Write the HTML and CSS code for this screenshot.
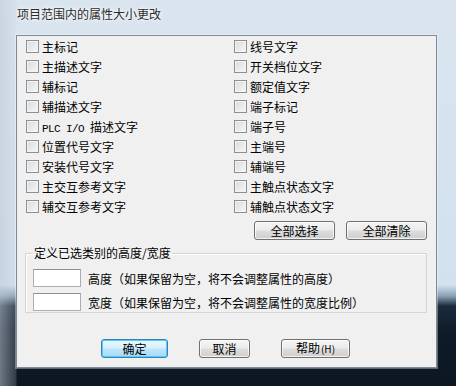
FILE: index.html
```html
<!DOCTYPE html>
<html lang="zh-CN">
<head>
    <meta charset="UTF-8">
    <title>项目范围内的属性大小更改</title>
    <link rel="stylesheet" href="styles.css">
</head>
<body>
    <div class="titlebar">项目范围内的属性大小更改</div>

    <div class="dialog">
        <div class="check-grid">
            <label class="check"><input type="checkbox"><span>主标记</span></label>
            <label class="check"><input type="checkbox"><span>线号文字</span></label>
            <label class="check"><input type="checkbox"><span>主描述文字</span></label>
            <label class="check"><input type="checkbox"><span>开关档位文字</span></label>
            <label class="check"><input type="checkbox"><span>辅标记</span></label>
            <label class="check"><input type="checkbox"><span>额定值文字</span></label>
            <label class="check"><input type="checkbox"><span>辅描述文字</span></label>
            <label class="check"><input type="checkbox"><span>端子标记</span></label>
            <label class="check"><input type="checkbox"><span><span class="latin">PLC I/O </span>描述文字</span></label>
            <label class="check"><input type="checkbox"><span>端子号</span></label>
            <label class="check"><input type="checkbox"><span>位置代号文字</span></label>
            <label class="check"><input type="checkbox"><span>主端号</span></label>
            <label class="check"><input type="checkbox"><span>安装代号文字</span></label>
            <label class="check"><input type="checkbox"><span>辅端号</span></label>
            <label class="check"><input type="checkbox"><span>主交互参考文字</span></label>
            <label class="check"><input type="checkbox"><span>主触点状态文字</span></label>
            <label class="check"><input type="checkbox"><span>辅交互参考文字</span></label>
            <label class="check"><input type="checkbox"><span>辅触点状态文字</span></label>
        </div>

        <div class="select-row">
            <button class="btn btn-wide">全部选择</button>
            <button class="btn btn-wide">全部清除</button>
        </div>

        <fieldset class="group">
            <legend>定义已选类别的高度/宽度</legend>
            <div class="size-row">
                <input class="size-input" type="text">
                <span>高度（如果保留为空，将不会调整属性的高度）</span>
            </div>
            <div class="size-row">
                <input class="size-input" type="text">
                <span>宽度（如果保留为空，将不会调整属性的宽度比例）</span>
            </div>
        </fieldset>

        <div class="footer">
            <button class="btn btn-default">确定</button>
            <button class="btn btn-cancel">取消</button>
            <button class="btn btn-help">帮助<span class="hotkey">(H)</span></button>
        </div>
    </div>
</body>
</html>
```

FILE: styles.css
```css
html, body {
    margin: 0;
    padding: 0;
}

body {
    width: 456px;
    height: 386px;
    overflow: hidden;
    font-family: "Noto Sans CJK SC", "Noto Sans", sans-serif;
    font-size: 12px;
    color: #000;
    background:
        linear-gradient(to right, rgba(190, 200, 210, 0.55) 0, rgba(200, 210, 220, 0.2) 16px, rgba(0, 0, 0, 0) 17px),
        linear-gradient(to bottom, #d9e4ee 0, #d3e1ef 285px, #8aa0b6 296px, #1c2c3e 306px, #0f1b29 330px, #0c1623 100%);
}

.titlebar {
    height: 35px;
    line-height: 28px;
    padding-left: 17px;
    color: #2b2b2b;
    text-shadow: 0 0 6px #ffffff, 0 0 3px #ffffff;
}

.dialog {
    width: 419px;
    height: 331px;
    margin-left: 16px;
    background: #f0f0f0;
    border: 1px solid #7d8a98;
    box-shadow: 0 0 0 1px rgba(255, 255, 255, 0.35);
    display: flex;
    flex-direction: column;
}

.check-grid {
    display: grid;
    grid-template-columns: 208px 1fr;
    padding-left: 9px;
}

.check {
    display: flex;
    align-items: center;
    height: 20px;
    gap: 3px;
    white-space: nowrap;
}

.check input {
    appearance: none;
    -webkit-appearance: none;
    width: 13px;
    height: 13px;
    margin: 0;
    border: 1px solid #8f8f8f;
    background: linear-gradient(135deg, #d6d8db 0, #eceded 60%, #f6f6f6 100%);
    box-shadow: inset 0 0 0 1px #f4f4f4;
    flex: none;
}

.latin {
    font-family: "Liberation Mono", monospace;
    font-size: 11px;
    letter-spacing: -0.6px;
}

.btn {
    font-family: inherit;
    font-size: 12px;
    color: #000;
    height: 19px;
    padding: 0;
    border: 1px solid #707070;
    border-radius: 3px;
    background: linear-gradient(to bottom, #f5f5f5 0, #ebebeb 48%, #dddddd 52%, #cfcfcf 100%);
    box-shadow: inset 0 0 0 1px rgba(255, 255, 255, 0.7);
    line-height: 16px;
}

.select-row {
    display: flex;
    justify-content: flex-end;
    gap: 11px;
    padding-right: 9px;
    margin-top: 5px;
}

.btn-wide {
    width: 81px;
}

.group {
    margin: 5px 9px 0 8px;
    padding: 7px 7px 1px 7px;
    border: 1px solid #d5d5d5;
    box-shadow: inset 1px 1px 0 #fff;
}

.group legend {
    padding: 0 1px;
    line-height: 16px;
}

.size-row {
    display: flex;
    align-items: center;
    gap: 7px;
    height: 18px;
    margin-top: 1px;
}

.size-row + .size-row {
    margin-top: 6px;
}

.size-input {
    width: 48px;
    height: 18px;
    box-sizing: border-box;
    margin: 0;
    border: 1px solid #abadb3;
    border-top-color: #8e9094;
    background: #fff;
}

.footer {
    display: flex;
    justify-content: center;
    gap: 31px;
    margin-top: 26px;
    padding-right: 2px;
}

.btn-default {
    width: 67px;
    border-color: #3c7fb1;
    background: linear-gradient(to bottom, #eaf6fd 0, #d9f0fc 48%, #bee6fd 52%, #a7d9f5 100%);
    box-shadow: inset 0 0 0 1px #48d0f8;
}

.btn-cancel {
    width: 51px;
}

.btn-help {
    width: 69px;
}

.hotkey {
    font-size: 10px;
    margin-left: 1px;
}
```
